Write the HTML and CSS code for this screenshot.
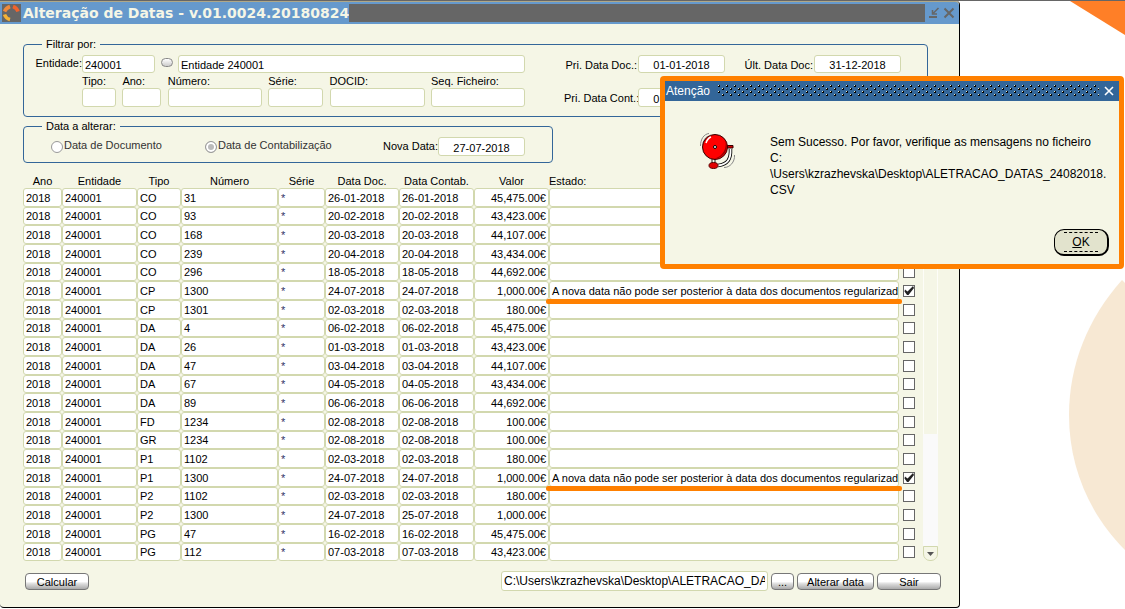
FILE: index.html
```html
<!DOCTYPE html>
<html lang="pt">
<head>
<meta charset="utf-8">
<title>Alteração de Datas</title>
<link rel="stylesheet" href="styles.css">
</head>
<body>
<svg class="backdrop" viewBox="0 0 165 609" aria-hidden="true">
  <path fill="#ff7f27" d="M110 1H165V35Z"/>
  <path fill="#f7e8d3" d="M162 280C128 318 109 365 109 415C109 468 130 515 165 550V283Z"/>
</svg>
<main class="window">
  <header class="titlebar">
    <svg class="logo" viewBox="0 0 19 18" aria-hidden="true">
      <rect width="19" height="18" fill="#666"/>
      <g fill="none" stroke-width="3.500">
        <path stroke="#f08a3c" d="M2.500 7.500Q4 4 8 2.500"/>
        <path stroke="#f0632d" d="M11 2.500Q15 4 16 7.500"/>
        <path stroke="#f5b335" d="M2.500 10.500Q4 14.500 8 15.500"/>
      </g>
    </svg>
    <h1 class="title">Alteração de Datas - v.01.0024.20180824</h1>
    <div class="title-fill"></div>
    <button class="win-btn" aria-label="Minimizar"><svg viewBox="0 0 12 12"><path d="M1 10H9" fill="none" stroke="#666" stroke-width="2"/><path d="M10.500 1L5.500 6M4.500 3V7H9" fill="none" stroke="#666" stroke-width="1.500"/></svg></button>
    <button class="win-btn" aria-label="Fechar"><svg viewBox="0 0 12 12"><path d="M1.500 1.500L10.500 10.500M10.500 1.500L1.500 10.500" fill="none" stroke="#666" stroke-width="2"/></svg></button>
  </header>

  <fieldset class="group filter">
    <legend>Filtrar por:</legend>
    <div class="filter-left">
      <div class="entity">
        <label class="entity-label" for="entidade">Entidade:</label>
        <input class="field entity-code" id="entidade" value="240001">
        <button class="lookup" aria-label="Procurar entidade"></button>
        <input class="field entity-name" aria-label="Nome da entidade" value="Entidade 240001">
      </div>
      <div class="criteria">
        <label>Tipo:<input class="field"></label>
        <label>Ano:<input class="field"></label>
        <label>Número:<input class="field"></label>
        <label>Série:<input class="field"></label>
        <label>DOCID:<input class="field"></label>
        <label>Seq. Ficheiro:<input class="field"></label>
      </div>
    </div>
    <div class="dates">
      <label for="pri-doc">Pri. Data Doc.:</label><input class="field date" id="pri-doc" value="01-01-2018">
      <label for="ult-doc">Últ. Data Doc:</label><input class="field date" id="ult-doc" value="31-12-2018">
      <label for="pri-cont">Pri. Data Cont.:</label><input class="field date" id="pri-cont" value="01-01-2018">
    </div>
  </fieldset>

  <fieldset class="group change">
    <legend>Data a alterar:</legend>
    <label class="option"><input type="radio" name="alvo" disabled>Data de Documento</label>
    <label class="option"><input type="radio" name="alvo" checked disabled>Data de Contabilização</label>
    <label class="new-date" for="nova">Nova Data:</label><input class="field date" id="nova" value="27-07-2018">
  </fieldset>

  <section class="records">
    <table class="grid">
      <colgroup><col class="c-ano"><col class="c-ent"><col class="c-tipo"><col class="c-num"><col class="c-serie"><col class="c-doc"><col class="c-cont"><col class="c-valor"><col><col class="c-check"></colgroup>
      <thead><tr><th>Ano</th><th>Entidade</th><th>Tipo</th><th>Número</th><th>Série</th><th>Data Doc.</th><th>Data Contab.</th><th>Valor</th><th class="left">Estado:</th><td></td></tr></thead>
      <tbody>
        <tr><td>2018</td><td>240001</td><td>CO</td><td>31</td><td>*</td><td>26-01-2018</td><td>26-01-2018</td><td>45,475.00€</td><td></td><td><input type="checkbox" aria-label="Linha 1"></td></tr>
        <tr><td>2018</td><td>240001</td><td>CO</td><td>93</td><td>*</td><td>20-02-2018</td><td>20-02-2018</td><td>43,423.00€</td><td></td><td><input type="checkbox" aria-label="Linha 2"></td></tr>
        <tr><td>2018</td><td>240001</td><td>CO</td><td>168</td><td>*</td><td>20-03-2018</td><td>20-03-2018</td><td>44,107.00€</td><td></td><td><input type="checkbox" aria-label="Linha 3"></td></tr>
        <tr><td>2018</td><td>240001</td><td>CO</td><td>239</td><td>*</td><td>20-04-2018</td><td>20-04-2018</td><td>43,434.00€</td><td></td><td><input type="checkbox" aria-label="Linha 4"></td></tr>
        <tr><td>2018</td><td>240001</td><td>CO</td><td>296</td><td>*</td><td>18-05-2018</td><td>18-05-2018</td><td>44,692.00€</td><td></td><td><input type="checkbox" aria-label="Linha 5"></td></tr>
        <tr class="failed"><td>2018</td><td>240001</td><td>CP</td><td>1300</td><td>*</td><td>24-07-2018</td><td>24-07-2018</td><td>1,000.00€</td><td>A nova data não pode ser posterior à data dos documentos regularizad</td><td><input type="checkbox" checked aria-label="Linha 6"></td></tr>
        <tr><td>2018</td><td>240001</td><td>CP</td><td>1301</td><td>*</td><td>02-03-2018</td><td>02-03-2018</td><td>180.00€</td><td></td><td><input type="checkbox" aria-label="Linha 7"></td></tr>
        <tr><td>2018</td><td>240001</td><td>DA</td><td>4</td><td>*</td><td>06-02-2018</td><td>06-02-2018</td><td>45,475.00€</td><td></td><td><input type="checkbox" aria-label="Linha 8"></td></tr>
        <tr><td>2018</td><td>240001</td><td>DA</td><td>26</td><td>*</td><td>01-03-2018</td><td>01-03-2018</td><td>43,423.00€</td><td></td><td><input type="checkbox" aria-label="Linha 9"></td></tr>
        <tr><td>2018</td><td>240001</td><td>DA</td><td>47</td><td>*</td><td>03-04-2018</td><td>03-04-2018</td><td>44,107.00€</td><td></td><td><input type="checkbox" aria-label="Linha 10"></td></tr>
        <tr><td>2018</td><td>240001</td><td>DA</td><td>67</td><td>*</td><td>04-05-2018</td><td>04-05-2018</td><td>43,434.00€</td><td></td><td><input type="checkbox" aria-label="Linha 11"></td></tr>
        <tr><td>2018</td><td>240001</td><td>DA</td><td>89</td><td>*</td><td>06-06-2018</td><td>06-06-2018</td><td>44,692.00€</td><td></td><td><input type="checkbox" aria-label="Linha 12"></td></tr>
        <tr><td>2018</td><td>240001</td><td>FD</td><td>1234</td><td>*</td><td>02-08-2018</td><td>02-08-2018</td><td>100.00€</td><td></td><td><input type="checkbox" aria-label="Linha 13"></td></tr>
        <tr><td>2018</td><td>240001</td><td>GR</td><td>1234</td><td>*</td><td>02-08-2018</td><td>02-08-2018</td><td>100.00€</td><td></td><td><input type="checkbox" aria-label="Linha 14"></td></tr>
        <tr><td>2018</td><td>240001</td><td>P1</td><td>1102</td><td>*</td><td>02-03-2018</td><td>02-03-2018</td><td>180.00€</td><td></td><td><input type="checkbox" aria-label="Linha 15"></td></tr>
        <tr class="failed"><td>2018</td><td>240001</td><td>P1</td><td>1300</td><td>*</td><td>24-07-2018</td><td>24-07-2018</td><td>1,000.00€</td><td>A nova data não pode ser posterior à data dos documentos regularizad</td><td><input type="checkbox" checked aria-label="Linha 16"></td></tr>
        <tr><td>2018</td><td>240001</td><td>P2</td><td>1102</td><td>*</td><td>02-03-2018</td><td>02-03-2018</td><td>180.00€</td><td></td><td><input type="checkbox" aria-label="Linha 17"></td></tr>
        <tr><td>2018</td><td>240001</td><td>P2</td><td>1300</td><td>*</td><td>24-07-2018</td><td>25-07-2018</td><td>1,000.00€</td><td></td><td><input type="checkbox" aria-label="Linha 18"></td></tr>
        <tr><td>2018</td><td>240001</td><td>PG</td><td>47</td><td>*</td><td>16-02-2018</td><td>16-02-2018</td><td>45,475.00€</td><td></td><td><input type="checkbox" aria-label="Linha 19"></td></tr>
        <tr><td>2018</td><td>240001</td><td>PG</td><td>112</td><td>*</td><td>07-03-2018</td><td>07-03-2018</td><td>43,423.00€</td><td></td><td><input type="checkbox" aria-label="Linha 20"></td></tr>
      </tbody>
    </table>
    <div class="scrollbar">
      <div class="thumb"></div>
      <div class="track"></div>
      <button class="scroll-down" aria-label="Descer"><svg viewBox="0 0 7 4"><path fill="#555" d="M0 0H7L3.500 4Z"/></svg></button>
    </div>
  </section>

  <footer class="actions">
    <button class="btn wide-s">Calcular</button>
    <input class="field path" aria-label="Ficheiro" value="C:\Users\kzrazhevska\Desktop\ALETRACAO_DATAS_24082018.CSV">
    <button class="btn browse">...</button>
    <button class="btn wide-l">Alterar data</button>
    <button class="btn wide-s">Sair</button>
  </footer>
</main>

<section class="alert" role="alertdialog" aria-labelledby="alert-title">
  <header class="alert-bar">
    <h2 id="alert-title">Atenção</h2>
    <svg class="grip" aria-hidden="true">
      <defs><pattern id="dots" width="8" height="6" patternUnits="userSpaceOnUse">
        <path fill="#dfe5cf" d="M0 0h1v1h-1zM4 3h1v1h-1z"/>
        <path fill="#000" d="M1 0h1v2h-2v-1h1zM5 3h1v2h-2v-1h1z"/>
      </pattern></defs>
      <rect width="100%" height="100%" fill="url(#dots)"/>
    </svg>
    <button class="alert-close" aria-label="Fechar aviso"><svg viewBox="0 0 10 10"><path d="M1 1L9 9M9 1L1 9" fill="none" stroke="#fff" stroke-width="1.600"/></svg></button>
  </header>
  <div class="alert-body">
    <svg class="bell" viewBox="0 0 36 38" aria-hidden="true">
      <g fill="none" stroke="#888"><path d="M0.500 13C0.500 6 4 1 9 .500M3 12C3 8 5 4 9 3"/><path d="M34.500 22C35 29 30 34.500 24 34.500"/></g>
      <path d="M30.500 16C31 26 28 31 18 32.500" fill="none" stroke="#000" stroke-width="3.500"/>
      <path d="M30.500 16C31 26 28 31 18 32.500" fill="none" stroke="#fff" stroke-width="1.800"/>
      <path d="M26 12.500H33V15H26Z" fill="#d00000" stroke="#300"/>
      <path d="M12 26V31M15 26V31" stroke="#222"/>
      <circle cx="15" cy="14" r="12.500" fill="#f00" stroke="#300"/>
      <path d="M25 6C30 15 25 26 12 26C21 25 28 17 25 6Z" fill="#900"/>
      <path d="M6 10C7 7 8 5 11 4" fill="none" stroke="#fff" stroke-width="1.500"/>
      <circle cx="15" cy="14" r="1.500" fill="#fff" stroke="#000"/>
      <ellipse cx="13.500" cy="32.500" rx="4.500" ry="3" fill="#e00000" stroke="#500"/>
    </svg>
    <p class="message">Sem Sucesso. Por favor, verifique as mensagens no ficheiro<br>C:<br>\Users\kzrazhevska\Desktop\ALETRACAO_DATAS_24082018.<br>CSV</p>
  </div>
  <button class="ok"><span><u>O</u>K</span></button>
</section>
</body>
</html>
```
FILE: styles.css
```css
* { box-sizing: border-box; }

body {
  margin: 0;
  position: relative;
  min-height: 100vh;
  background: #fff;
  border-top: 1px solid #666;
  font: 11px/14px "Liberation Sans", Arial, sans-serif;
  color: #000;
}

button, input { font: inherit; color: inherit; margin: 0; padding: 0; }
button { border: 0; background: none; }

.backdrop { position: absolute; top: -1px; right: 0; width: 165px; height: 609px; }

.window {
  width: calc(100% - 165px);
  background: #f5f6e6;
  border-right: 1px solid #000;
  border-bottom: 1px solid #000;
  border-radius: 0 4px 4px 4px;
  padding-bottom: 16px;
}

.titlebar {
  display: flex;
  align-items: center;
  height: 23px;
  padding: 0 4px 0 2px;
  background: #6699cc;
  border-top: 1px solid #b0a888;
  border-radius: 0 4px 0 0;
}
.logo { width: 19px; height: 18px; }
.title {
  margin: 0 0 0 2px;
  font: bold 14px/18px "DejaVu Sans", Verdana, sans-serif;
  color: #f5f6e6;
  white-space: nowrap;
}
.title-fill { flex: 1; height: 18px; background: #666; }
.win-btn { width: 12px; height: 12px; margin-left: 3px; }
.win-btn svg, .alert-close svg { display: block; width: 100%; height: 100%; }

.group {
  display: flex;
  min-width: 0;
  border: 1px solid #336699;
  border-radius: 4px;
}
.group legend { padding: 0 4px; }

.field {
  height: 19px;
  min-width: 0;
  padding: 2px 2px 0;
  background: #fff;
  border: 1px solid #d2d8ae;
  border-radius: 3px;
  outline: 0;
}
.date { width: 87px; text-align: center; }

.filter { margin: 13px 31px 0 23px; padding: 4px 26px 9px 14px; gap: 39px; }
.filter legend { margin-left: 4px; }
.filter-left { flex: 1; min-width: 0; }
.entity { display: flex; height: 18px; }
.entity .field { height: 18px; }
.entity-label { width: 44px; line-height: 16px; text-align: right; display: flex; justify-content: flex-end; }
.entity-code { width: 73px; }
.lookup {
  width: 12px;
  height: 9px;
  margin: 3px 5px 0 6px;
  border: 1px solid #888;
  border-radius: 5px;
  background: linear-gradient(#fff, #ccc);
}
.entity-name { flex: 1; }
.criteria {
  display: grid;
  grid-template-columns: 34px 39px 94px 55px 95px 94px;
  column-gap: 6px;
  justify-content: space-between;
  padding-left: 44px;
}
.criteria label { display: grid; grid-template-rows: 15px 19px; line-height: 17px; }

.dates {
  display: grid;
  grid-template-columns: 74px 87px 89px 87px;
  grid-template-rows: 18px 19px;
  row-gap: 15px;
  text-align: right;
}
.dates label { padding-right: 1px; line-height: 20px; white-space: nowrap; }
.dates .date { height: auto; }

.change { width: 530px; margin: 2px 0 0 23px; padding: 4px 27px 6px 18px; }
.option { display: flex; gap: 1px; width: 154px; line-height: 17px; color: #333; white-space: nowrap; }
.change legend + .option { margin-left: 9px; }
.option input {
  appearance: none;
  width: 12px;
  height: 12px;
  margin-top: 4px;
  border: 1px solid #999;
  border-radius: 50%;
  background: #fff;
}
.option input:checked { background: #bbb; box-shadow: inset 0 0 0 2px #fff; }
.new-date { margin-left: auto; line-height: 18px; }

.records { display: flex; gap: 4px; margin: 11px 21px 0 23px; }
.grid { flex: 1; table-layout: fixed; width: 100%; border-spacing: 0; }
.grid th, .grid td { padding: 0; }
.grid th { height: 14px; font-weight: normal; white-space: nowrap; }
.grid th.left { text-align: left; }
.c-ano { width: 39px; }
.c-ent, .c-cont, .c-valor { width: 75px; }
.c-tipo { width: 44px; }
.c-num { width: 97px; }
.c-serie { width: 47px; }
.c-doc { width: 74px; }
.c-check { width: 20px; }

.grid tbody tr { height: 19px; }
.grid tbody tr:nth-child(3n + 2) { height: 18px; }
.grid tbody td {
  padding: 0 2px;
  line-height: 16px;
  background: #fff;
  border: 1px solid #d2d8ae;
  border-radius: 3px;
  white-space: nowrap;
}
.grid tbody td:nth-child(5) { color: #336; }
.grid tbody td:nth-child(8) { text-align: right; }
.grid tbody td:last-child { padding: 0 0 0 3px; background: none; border-color: transparent; }
.failed td:nth-child(9) { position: relative; }
.failed td:nth-child(9)::after {
  content: "";
  position: absolute;
  left: -4px;
  right: -4px;
  bottom: -5px;
  height: 5px;
  border-radius: 2px;
  background: #ff8000;
}
.grid input {
  appearance: none;
  display: block;
  width: 12px;
  height: 12px;
  border: 1px solid #666;
  background: #fff;
}
.grid input:checked::after {
  content: "";
  display: block;
  width: 10px;
  height: 10px;
  background: #222;
  clip-path: polygon(10% 40%, 35% 60%, 90% 5%, 100% 25%, 45% 95%, 30% 95%, 5% 60%);
}

.scrollbar { display: flex; flex-direction: column; width: 15px; padding-top: 14px; }
.thumb { flex: 1; border: solid #fdfdf8; border-width: 0 1px; }
.track { height: 112px; background: #fafafa; }
.scroll-down {
  display: grid;
  place-items: center;
  height: 15px;
  border: 1px solid #d2d8ae;
  border-radius: 0 0 7px 7px;
}
.scroll-down svg { width: 7px; height: 4px; }

.actions { display: flex; align-items: center; gap: 3px; margin: 10px 18px 0 25px; }
.btn {
  height: 17px;
  border: 1px solid #777;
  border-radius: 4px;
  background: linear-gradient(#fff 50%, #ddd 65%, #aaa);
  line-height: 16px;
}
.wide-s { width: 64px; }
.wide-l { width: 77px; }
.browse { width: 23px; }
.path { width: 267px; height: 20px; margin-left: auto; padding-top: 0; font-size: 12px; }

.alert {
  position: absolute;
  top: 75px;
  right: 1px;
  width: 464px;
  border: 5px solid #ff8000;
  border-radius: 4px;
  background: #f5f6e6;
  font-size: 12px;
}
.alert-bar { display: flex; align-items: center; height: 20px; padding: 0 5px 0 1px; background: #336699; color: #fff; }
.alert-bar h2 { margin: 0 8px 0 0; font-size: 12px; font-weight: normal; }
.grip { flex: 1; height: 12px; }
.alert-close { width: 10px; height: 10px; margin-left: 5px; }
.alert-body { display: flex; gap: 34px; padding: 32px 0 0 35px; }
.bell { width: 36px; height: 38px; }
.message { margin: 0; padding-top: 1px; line-height: 16px; white-space: nowrap; }
.ok {
  display: block;
  width: 55px;
  height: 27px;
  margin: 31px 10px 8px auto;
  padding: 2px 9px;
  border: solid #000;
  border-width: 1px 2px 2px 1px;
  border-radius: 10px;
  background: #e2e3cd;
}
.ok span { display: block; border: dashed #000; border-width: 1px 0; line-height: 18px; }
```
